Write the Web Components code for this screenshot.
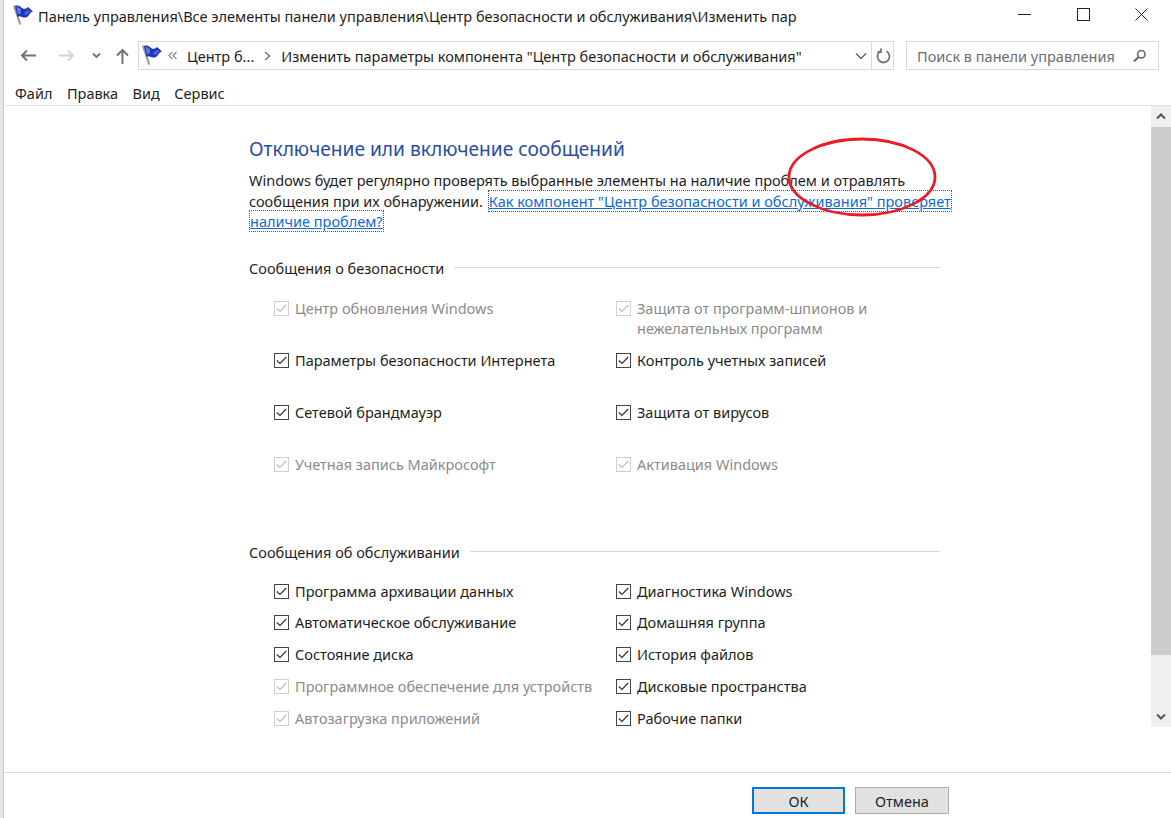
<!DOCTYPE html>
<html lang="ru">
<head>
<meta charset="utf-8">
<title>Центр безопасности и обслуживания</title>
<style>
  html, body { margin: 0; height: 100%; background: #fff; overflow: hidden; }
  body { font: 14.5px "Noto Sans", "Open Sans", sans-serif; color: #1e1e1e; }
</style>
</head>
<body>
<settings-window>
  <win-titlebar slot="top" text="Панель управления\Все элементы панели управления\Центр безопасности и обслуживания\Изменить пар"></win-titlebar>
  <win-navbar slot="top"></win-navbar>
  <win-menubar slot="top"></win-menubar>

  <msg-page>
    <msg-section title="Сообщения о безопасности" style="--top:26px">
      <msg-check off>Центр обновления Windows</msg-check>
      <msg-check off>Защита от программ-шпионов и<br>нежелательных программ</msg-check>
      <msg-check>Параметры безопасности Интернета</msg-check>
      <msg-check>Контроль учетных записей</msg-check>
      <msg-check>Сетевой брандмауэр</msg-check>
      <msg-check>Защита от вирусов</msg-check>
      <msg-check off>Учетная запись Майкрософт</msg-check>
      <msg-check off>Активация Windows</msg-check>
    </msg-section>
    <msg-section title="Сообщения об обслуживании" compact style="--top:48px">
      <msg-check>Программа архивации данных</msg-check>
      <msg-check>Диагностика Windows</msg-check>
      <msg-check>Автоматическое обслуживание</msg-check>
      <msg-check>Домашняя группа</msg-check>
      <msg-check>Состояние диска</msg-check>
      <msg-check>История файлов</msg-check>
      <msg-check off>Программное обеспечение для устройств</msg-check>
      <msg-check>Дисковые пространства</msg-check>
      <msg-check off>Автозагрузка приложений</msg-check>
      <msg-check>Рабочие папки</msg-check>
    </msg-section>
  </msg-page>

  <win-footer slot="bottom"></win-footer>
  <red-ring slot="over"></red-ring>
</settings-window>

<script>
const FLAG = `
  <svg width="20" height="20" viewBox="0 0 20 20" aria-hidden="true" style="display:block">
    <path d="M1 .5 7.300 19.500" stroke="#9b9ba3" stroke-width="2.200" fill="none"/>
    <path d="M2 1C5 0 7 1 9 3c2 1.500 4 1 6-1l5 4.500c-2 .5-3 1.500-4 3.500-2 3-5 3-7 2-2-1-3.500-1-4.500 0z" fill="#2233bb"/>
    <path d="M3.500 2C5.500 1.800 7 3 8 5L7.500 9C6.500 8.600 5.500 8.600 4.800 9z" fill="#5f7be0"/>
    <path d="M11.500 6.500c1.500.2 2.800-.5 3.500-2l2.500 2.300c-1.300.5-2.200 1.300-3 2.700-1 .8-2.200.6-3 0z" fill="#4a62d8"/>
  </svg>`;

customElements.define("settings-window", class extends HTMLElement {
  constructor() {
    super();
    this.attachShadow({ mode: "open" }).innerHTML = `
      <style>
        :host { display: flex; flex-direction: column; position: relative; box-sizing: border-box;
                width: 1171px; height: 818px; border-left: 3px solid #e6e6e6; background: #fff;
                box-shadow: inset 1px 0 #c8c8c8; }
        .middle { flex: 1; min-height: 0; display: flex; align-items: flex-start; }
      </style>
      <slot name="top"></slot>
      <div class="middle">
        <slot></slot>
        <win-scrollbar></win-scrollbar>
      </div>
      <slot name="bottom"></slot>
      <slot name="over"></slot>`;
  }
});

customElements.define("win-titlebar", class extends HTMLElement {
  constructor() {
    super();
    this.attachShadow({ mode: "open" });
  }
  connectedCallback() {
    this.shadowRoot.innerHTML = `
      <style>
        :host { display: flex; align-items: center; height: 32px; padding-left: 10px; flex: none; }
        .flag { width: 20px; height: 20px; margin-right: 5px; margin-top: -2px; }
        .text { flex: 1; white-space: nowrap; overflow: hidden; }
        .btns { display: flex; width: 176px; height: 100%; padding-bottom: 3px; box-sizing: border-box; flex: none; }
        .btns span { flex: 1; display: flex; align-items: center; justify-content: center; }
      </style>
      <span class="flag">${FLAG}</span>
      <span class="text">${this.getAttribute("text")}</span>
      <div class="btns">
        <span><svg width="13" height="13"><path d="M0 6.500H13" stroke="#222" stroke-width="1"/></svg></span>
        <span><svg width="13" height="13"><rect x=".5" y=".5" width="12" height="12" fill="none" stroke="#222"/></svg></span>
        <span><svg width="13" height="13"><path d="M.5.500 12.500 12.500M12.500.500 .5 12.500" stroke="#222" fill="none"/></svg></span>
      </div>`;
  }
});

customElements.define("win-navbar", class extends HTMLElement {
  constructor() {
    super();
    this.attachShadow({ mode: "open" }).innerHTML = `
      <style>
        :host { display: flex; align-items: center; height: 29px; margin-top: 9px; padding-left: 17px; flex: none; }
        .arrows { display: flex; align-items: center; width: 118px; flex: none; }
        .arrows svg { display: block; flex: none; }
        .addr { display: flex; align-items: center; box-sizing: border-box; width: 756px; height: 29px; flex: none;
                border: 1px solid #d9d9d9; white-space: nowrap; }
        .addr .flag { width: 20px; height: 20px; margin: -1px 6px 0 3px; }
        .addr .grow { flex: 1; }
        .refresh { width: 22px; height: 100%; box-sizing: border-box; padding-left: 2px; display: flex; align-items: center; justify-content: center; border-left: 1px solid #d9d9d9; }
        .search { display: flex; align-items: center; box-sizing: border-box; width: 253px; height: 29px; margin-left: 12px; flex: none;
                  border: 1px solid #d9d9d9; padding: 0 12px 0 10px; color: #6d6d6d; }
        .search span { flex: 1; white-space: nowrap; }
      </style>
      <div class="arrows">
        <svg width="16" height="13" style="margin-right:23px"><path d="M16 6.500H2M7 1.500 2 6.500l5 5" stroke="#737373" stroke-width="2" fill="none"/></svg>
        <svg width="16" height="13" style="margin-right:17px"><path d="M0 6.500h14M9 1.500l5 5-5 5" stroke="#d4d4d4" stroke-width="2" fill="none"/></svg>
        <svg width="9" height="7" style="margin-right:14px"><path d="M1 1.500 4.500 5 8 1.500" stroke="#737373" stroke-width="1.800" fill="none"/></svg>
        <svg width="15" height="16"><path d="M7.500 16V2M2 7.500l5.500-5.500 5.500 5.500" stroke="#737373" stroke-width="2" fill="none"/></svg>
      </div>
      <div class="addr">
        <span class="flag">${FLAG}</span>
        <svg width="9" height="9" style="margin:0 10px 0 0"><path d="M4.500 1 1 4.500 4.500 8M8.500 1 5 4.500 8.500 8" stroke="#8a8a8a" stroke-width="1.200" fill="none"/></svg>
        <span>Центр б...</span>
        <svg width="7" height="10" style="margin:0 10px"><path d="M1 1 5.500 5 1 9" stroke="#777" stroke-width="1.500" fill="none"/></svg>
        <span>Изменить параметры компонента "Центр безопасности и обслуживания"</span>
        <span class="grow"></span>
        <svg width="12" height="8" style="margin-right:4px"><path d="M1 1.500 6 6.500 11 1.500" stroke="#666" stroke-width="1.500" fill="none"/></svg>
        <div class="refresh"><svg width="15" height="16" viewBox="0 0 15 16"><path d="M4.500 3.300A6 6 0 1 0 10.500 3.300M5 .5V4H1.500" stroke="#737373" stroke-width="1.800" fill="none"/></svg></div>
      </div>
      <div class="search">
        <span>Поиск в панели управления</span>
        <svg width="13" height="14" viewBox="0 0 13 14"><circle cx="8.300" cy="5.200" r="3.700" fill="none" stroke="#666" stroke-width="1.600"/><path d="M5.500 8 1 12.500" stroke="#666" stroke-width="2"/></svg>
      </div>`;
  }
});

customElements.define("win-menubar", class extends HTMLElement {
  constructor() {
    super();
    this.attachShadow({ mode: "open" }).innerHTML = `
      <style>
        :host { display: flex; align-items: center; gap: 14.500px; height: 36px; padding: 10px 0 0 12px; box-sizing: border-box;
                border-bottom: 1px solid #e3e3e3; flex: none; }
      </style>
      <span>Файл</span><span>Правка</span><span>Вид</span><span>Сервис</span>`;
  }
});

customElements.define("msg-page", class extends HTMLElement {
  constructor() {
    super();
    this.attachShadow({ mode: "open" }).innerHTML = `
      <style>
        :host { display: block; flex: 1; min-width: 0; padding: 30px 0 0 246px; box-sizing: border-box; }
        h1 { margin: 0; font-size: 19.150px; line-height: 26px; font-weight: 400; color: #2b4ba5; }
        p { margin: 8px 0 0; line-height: 20.500px; white-space: nowrap; }
        a { color: #0f6bd2; text-decoration: underline;
            border: 1px dotted #555; -webkit-box-decoration-break: clone; box-decoration-break: clone; }
        .nudge { display: inline-block; width: 1px; }
        .body { width: 691px; }
      </style>
      <h1>Отключение или включение сообщений</h1>
      <p>Windows будет регулярно проверять выбранные элементы на наличие проблем и отравлять<br>сообщения при их обнаружении. <span class="nudge"></span><a>Как компонент "Центр безопасности и обслуживания" проверяет<br>наличие проблем?</a></p>
      <div class="body"><slot></slot></div>`;
  }
});

customElements.define("msg-section", class extends HTMLElement {
  constructor() {
    super();
    this.attachShadow({ mode: "open" });
  }
  connectedCallback() {
    const compact = this.hasAttribute("compact");
    this.shadowRoot.innerHTML = `
      <style>
        :host { display: block; padding-top: var(--top, 30px); }
        .head { display: flex; align-items: center; gap: 10px; height: 20px; }
        .head span { white-space: nowrap; }
        .head i { flex: 1; height: 1px; background: #d9d9d9; }
        .grid { display: grid; grid-template-columns: 342px 1fr; margin: ${compact ? 19 : 20}px 0 0 25px; width: 666px;
                grid-auto-rows: ${compact ? 20 : 40}px; row-gap: ${compact ? 11.8 : 12}px; }
      </style>
      <div class="head"><span>${this.getAttribute("title")}</span><i></i></div>
      <div class="grid"><slot></slot></div>`;
    this.removeAttribute("title");
  }
});

customElements.define("msg-check", class extends HTMLElement {
  constructor() {
    super();
    this.attachShadow({ mode: "open" }).innerHTML = `
      <style>
        :host { display: flex; gap: 6px; line-height: 20px; min-height: 20px; }
        :host([off]) { color: #8b8b8b; }
        .box { flex: none; box-sizing: border-box; width: 15px; height: 15px; margin-top: 3px;
               border: 1px solid #444; display: flex; align-items: center; justify-content: center; background: #fff; }
        :host([off]) .box { border-color: #cfcfcf; }
        svg path { stroke: #333; }
        :host([off]) svg path { stroke: #bdbdbd; }
        .label { white-space: nowrap; }
      </style>
      <span class="box"><svg width="11" height="9"><path d="M.8 4.500 4 7.500 10.200 1" fill="none" stroke-width="1.200"/></svg></span>
      <span class="label"><slot></slot></span>`;
  }
});

customElements.define("win-scrollbar", class extends HTMLElement {
  constructor() {
    super();
    this.attachShadow({ mode: "open" }).innerHTML = `
      <style>
        :host { display: flex; flex-direction: column; flex: none; width: 20px; height: 621px; background: #f0f0f0; }
        .btn { height: 21px; display: flex; align-items: center; justify-content: center; flex: none; }
        .thumb { height: 528px; background: #cdcdcd; flex: none; }
        .rest { flex: 1; }
      </style>
      <div class="btn"><svg width="10" height="7"><path d="M1 5.500 5 1.500 9 5.500" fill="none" stroke="#555" stroke-width="2"/></svg></div>
      <div class="thumb"></div>
      <div class="rest"></div>
      <div class="btn"><svg width="10" height="7"><path d="M1 1.500 5 5.500 9 1.500" fill="none" stroke="#555" stroke-width="2"/></svg></div>`;
  }
});

customElements.define("win-footer", class extends HTMLElement {
  constructor() {
    super();
    this.attachShadow({ mode: "open" }).innerHTML = `
      <style>
        :host { display: flex; justify-content: flex-end; gap: 10px; flex: none; height: 46px; box-sizing: border-box;
                border-top: 1px solid #dcdcdc; padding: 14px 222px 0 0; }
        button { font: inherit; color: inherit; width: 94px; height: 27px; padding: 0; background: #e1e1e1; border: 1px solid #adadad; box-sizing: border-box; }
        button.def { width: 93px; border: 2px solid #0078d7; }
      </style>
      <button class="def">ОК</button>
      <button>Отмена</button>`;
  }
});

customElements.define("red-ring", class extends HTMLElement {
  constructor() {
    super();
    this.attachShadow({ mode: "open" }).innerHTML = `
      <style>
        :host { position: absolute; left: 779px; top: 133px; width: 160px; height: 88px; pointer-events: none; }
        svg { display: block; }
      </style>
      <svg width="160" height="88" viewBox="0 0 160 88">
        <ellipse cx="80" cy="44" rx="73" ry="38" fill="none" stroke="#ed1c24" stroke-width="2.800"/>
      </svg>`;
  }
});
</script>
</body>
</html>
